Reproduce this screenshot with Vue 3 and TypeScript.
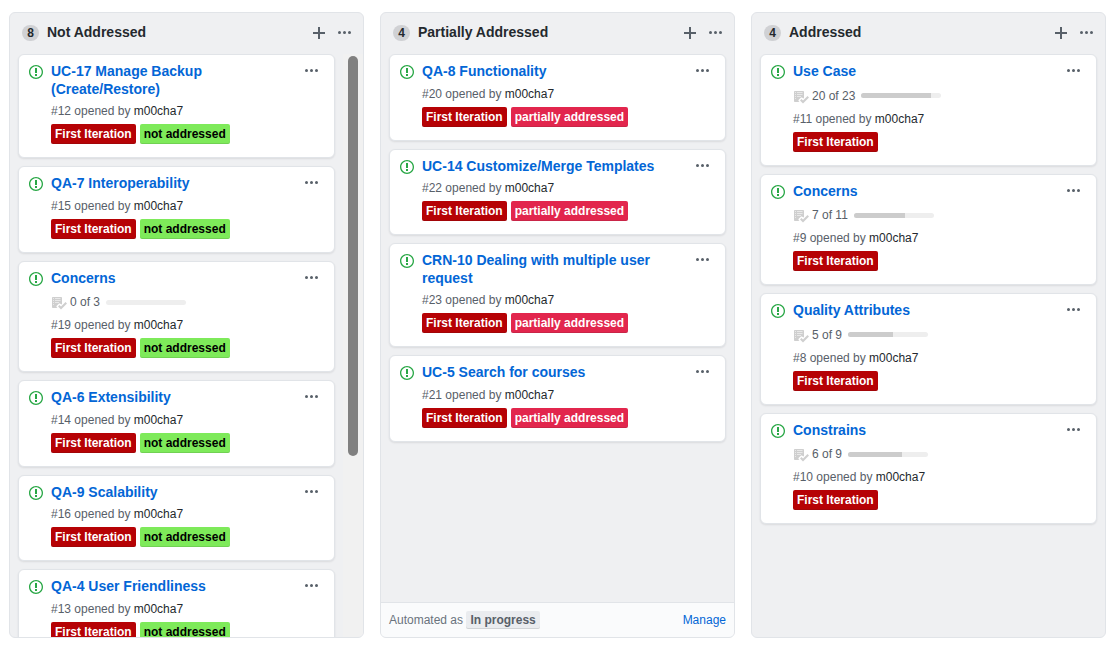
<script setup lang="ts">
interface Card {
  title: string
  number: number
  done?: number
  total?: number
  tag?: 'not' | 'partial'
}

interface Column {
  name: string
  count: number
  cards: Card[]
  scroll?: boolean
  automation?: string
}

const tagText = { not: 'not addressed', partial: 'partially addressed' }

const columns: Column[] = [
  {
    name: 'Not Addressed',
    count: 8,
    scroll: true,
    cards: [
      { title: 'UC-17 Manage Backup (Create/Restore)', number: 12, tag: 'not' },
      { title: 'QA-7 Interoperability', number: 15, tag: 'not' },
      { title: 'Concerns', number: 19, done: 0, total: 3, tag: 'not' },
      { title: 'QA-6 Extensibility', number: 14, tag: 'not' },
      { title: 'QA-9 Scalability', number: 16, tag: 'not' },
      { title: 'QA-4 User Friendliness', number: 13, tag: 'not' },
    ],
  },
  {
    name: 'Partially Addressed',
    count: 4,
    automation: 'In progress',
    cards: [
      { title: 'QA-8 Functionality', number: 20, tag: 'partial' },
      { title: 'UC-14 Customize/Merge Templates', number: 22, tag: 'partial' },
      { title: 'CRN-10 Dealing with multiple user request', number: 23, tag: 'partial' },
      { title: 'UC-5 Search for courses', number: 21, tag: 'partial' },
    ],
  },
  {
    name: 'Addressed',
    count: 4,
    cards: [
      { title: 'Use Case', number: 11, done: 20, total: 23 },
      { title: 'Concerns', number: 9, done: 7, total: 11 },
      { title: 'Quality Attributes', number: 8, done: 5, total: 9 },
      { title: 'Constrains', number: 10, done: 6, total: 9 },
    ],
  },
]

function percent(card: Card): string {
  return `${Math.round(((card.done ?? 0) / (card.total ?? 1)) * 100)}%`
}
</script>

<template>
  <main class="board">
    <section v-for="column in columns" :key="column.name" class="column">
      <header class="column-header">
        <span class="counter">{{ column.count }}</span>
        <h2 class="column-title">{{ column.name }}</h2>
        <button class="icon-button" type="button" :aria-label="`Add a note to ${column.name}`">
          <svg width="12" height="16" viewBox="0 0 12 16" aria-hidden="true">
            <path d="M12 9H7v5H5V9H0V7h5V2h2v5h5v2z" />
          </svg>
        </button>
        <button class="icon-button" type="button" :aria-label="`${column.name} menu`">
          <svg width="13" height="16" viewBox="0 0 13 16" aria-hidden="true">
            <path d="M1.5 9a1.5 1.5 0 1 0 0-3 1.5 1.5 0 0 0 0 3zm5 0a1.5 1.5 0 1 0 0-3 1.5 1.5 0 0 0 0 3zM13 7.5a1.5 1.5 0 1 1-3 0 1.5 1.5 0 0 1 3 0z" />
          </svg>
        </button>
      </header>

      <div class="column-body">
        <div class="cards">
          <article v-for="card in column.cards" :key="card.number" class="card">
            <svg class="issue-icon" width="14" height="16" viewBox="0 0 14 16" aria-hidden="true">
              <path d="M7 2.3c3.14 0 5.7 2.56 5.7 5.7s-2.56 5.7-5.7 5.7A5.71 5.71 0 0 1 1.3 8c0-3.14 2.56-5.7 5.7-5.7zM7 1C3.14 1 0 4.14 0 8s3.14 7 7 7 7-3.14 7-7-3.14-7-7-7zm1 3H6v5h2V4zm0 6H6v2h2v-2z" />
            </svg>
            <div class="card-main">
              <h3 class="card-title"><a href="#">{{ card.title }}</a></h3>
              <div v-if="card.total" class="tasks">
                <svg width="16" height="16" viewBox="0 0 16 16" aria-hidden="true">
                  <path d="M16 9.5l-6 6-3-3L8.500 11l1.500 1.500L14.500 8 16 9.500z" />
                  <path d="M5.700 13.200l.8.8H2c-.55 0-1-.45-1-1V4c0-.55.45-1 1-1h8c.55 0 1 .45 1 1v6.500l-1.800-.8c-.39-.39-1.030-.39-1.420 0L5.700 11.800a1 1 0 0 0 0 1.400z" />
                  <path class="tasks-lines" d="M4 4h5.500v1H4zm0 2h5.500v1H4zm0 2h4v1H4zM2 4h1v1H2zm0 2h1v1H2zm0 2h1v1H2zm0 2h1v1H2z" />
                </svg>
                <span class="tasks-text">{{ card.done }} of {{ card.total }}</span>
                <span class="bar"><span class="bar-fill" :style="{ width: percent(card) }"></span></span>
              </div>
              <p class="meta">#{{ card.number }} opened by <a href="#">m00cha7</a></p>
              <div class="labels">
                <a class="label first" href="#">First Iteration</a>
                <a v-if="card.tag" class="label" :class="card.tag" href="#">{{ tagText[card.tag] }}</a>
              </div>
            </div>
            <button class="icon-button" type="button" :aria-label="`${card.title} menu`">
              <svg width="13" height="16" viewBox="0 0 13 16" aria-hidden="true">
                <path d="M1.5 9a1.5 1.5 0 1 0 0-3 1.5 1.5 0 0 0 0 3zm5 0a1.5 1.5 0 1 0 0-3 1.5 1.5 0 0 0 0 3zM13 7.5a1.5 1.5 0 1 1-3 0 1.5 1.5 0 0 1 3 0z" />
              </svg>
            </button>
          </article>
        </div>
        <div v-if="column.scroll" class="track" aria-hidden="true"><div class="thumb"></div></div>
      </div>

      <footer v-if="column.automation" class="column-footer">
        <span>Automated as <span class="state">{{ column.automation }}</span></span>
        <a href="#">Manage</a>
      </footer>
    </section>
  </main>
</template>

<style>
body {
  margin: 0;
  background: #fff;
}
</style>

<style scoped>
.board {
  box-sizing: border-box;
  display: flex;
  gap: 16px;
  height: 100vh;
  padding: 12px 14px 11px 9px;
  font-family: "Liberation Sans", Arial, sans-serif;
  font-size: 12px;
  line-height: 18px;
  color: #24292e;
}

a {
  color: #0366d6;
  text-decoration: none;
}

.column {
  flex: 1;
  min-width: 0;
  display: flex;
  flex-direction: column;
  overflow: hidden;
  border: 1px solid #e1e4e8;
  border-radius: 6px;
  background: #eff0f2;
}

.column-header {
  box-sizing: border-box;
  display: flex;
  flex-shrink: 0;
  align-items: center;
  height: 41px;
  padding: 0 12px 2px;
}

.counter {
  box-sizing: border-box;
  min-width: 17px;
  padding: 2px 5px;
  border-radius: 10px;
  background: #d0d1d4;
  font-weight: 600;
  line-height: 12px;
  text-align: center;
}

.column-title {
  flex: 1;
  margin: 0 0 0 8px;
  padding-bottom: 2px;
  font-size: 14px;
  font-weight: 600;
  line-height: 20px;
}

.icon-button {
  display: block;
  flex-shrink: 0;
  padding: 0;
  border: 0;
  background: none;
  color: #586069;
  line-height: 0;
  cursor: pointer;
}

.icon-button + .icon-button {
  margin-left: 13px;
}

svg {
  display: block;
  flex-shrink: 0;
  fill: currentColor;
}

.column-body {
  flex: 1;
  min-height: 0;
  display: flex;
}

.cards {
  flex: 1;
  min-width: 0;
  padding: 0 8px;
  overflow: hidden;
}

.card {
  display: flex;
  align-items: flex-start;
  margin-bottom: 8px;
  padding: 8px 16px 13px 10px;
  border: 1px solid #e1e4e8;
  border-radius: 6px;
  background: #fff;
  box-shadow: 0 1px 2px rgba(27, 31, 35, 0.1);
}

.issue-icon {
  margin-top: 1px;
  color: #28a745;
}

.card-main {
  flex: 1;
  min-width: 0;
  padding: 0 24px 0 8px;
}

.card-title {
  margin: 0;
  font-size: 14px;
  font-weight: 600;
  line-height: 1.25;
}

.tasks {
  display: flex;
  align-items: center;
  height: 18px;
  margin: 6px 0 5px;
  color: #586069;
}

.tasks svg {
  color: #cfcfcf;
}

.tasks .tasks-lines {
  fill: #e9e9e9;
}

.tasks-text {
  margin: 0 6px 0 3px;
}

.bar {
  display: block;
  width: 80px;
  height: 5px;
  overflow: hidden;
  border-radius: 3px;
  background: #eee;
}

.bar-fill {
  display: block;
  height: 100%;
  background: #ccc;
}

.meta {
  margin: 4px 0;
  color: #586069;
}

.meta a {
  color: #24292e;
}

.labels {
  display: flex;
  gap: 4px;
}

.label {
  padding: 0 4px;
  border-radius: 2px;
  box-shadow: inset 0 -1px 0 rgba(27, 31, 35, 0.12);
  color: #fff;
  font-weight: 600;
  line-height: 20px;
  white-space: nowrap;
}

.first {
  background: #b60205;
}

.not {
  background: #7eea5a;
  color: #000;
}

.partial {
  background: #e2264d;
}

.track {
  box-sizing: border-box;
  width: 20px;
  padding: 2px 5px;
  background: #f1f1f1;
}

.thumb {
  height: 69%;
  border-radius: 5px;
  background: #808080;
}

.column-footer {
  display: flex;
  align-items: center;
  justify-content: space-between;
  padding: 8px;
  border-top: 1px solid #e1e4e8;
  background: #fafbfc;
  color: #6a737d;
}

.state {
  display: inline-block;
  padding: 0 4px;
  border-radius: 2px;
  background: #eaecef;
  box-shadow: inset 0 -1px 0 rgba(27, 31, 35, 0.12);
  color: #586069;
  font-weight: 600;
}
</style>
